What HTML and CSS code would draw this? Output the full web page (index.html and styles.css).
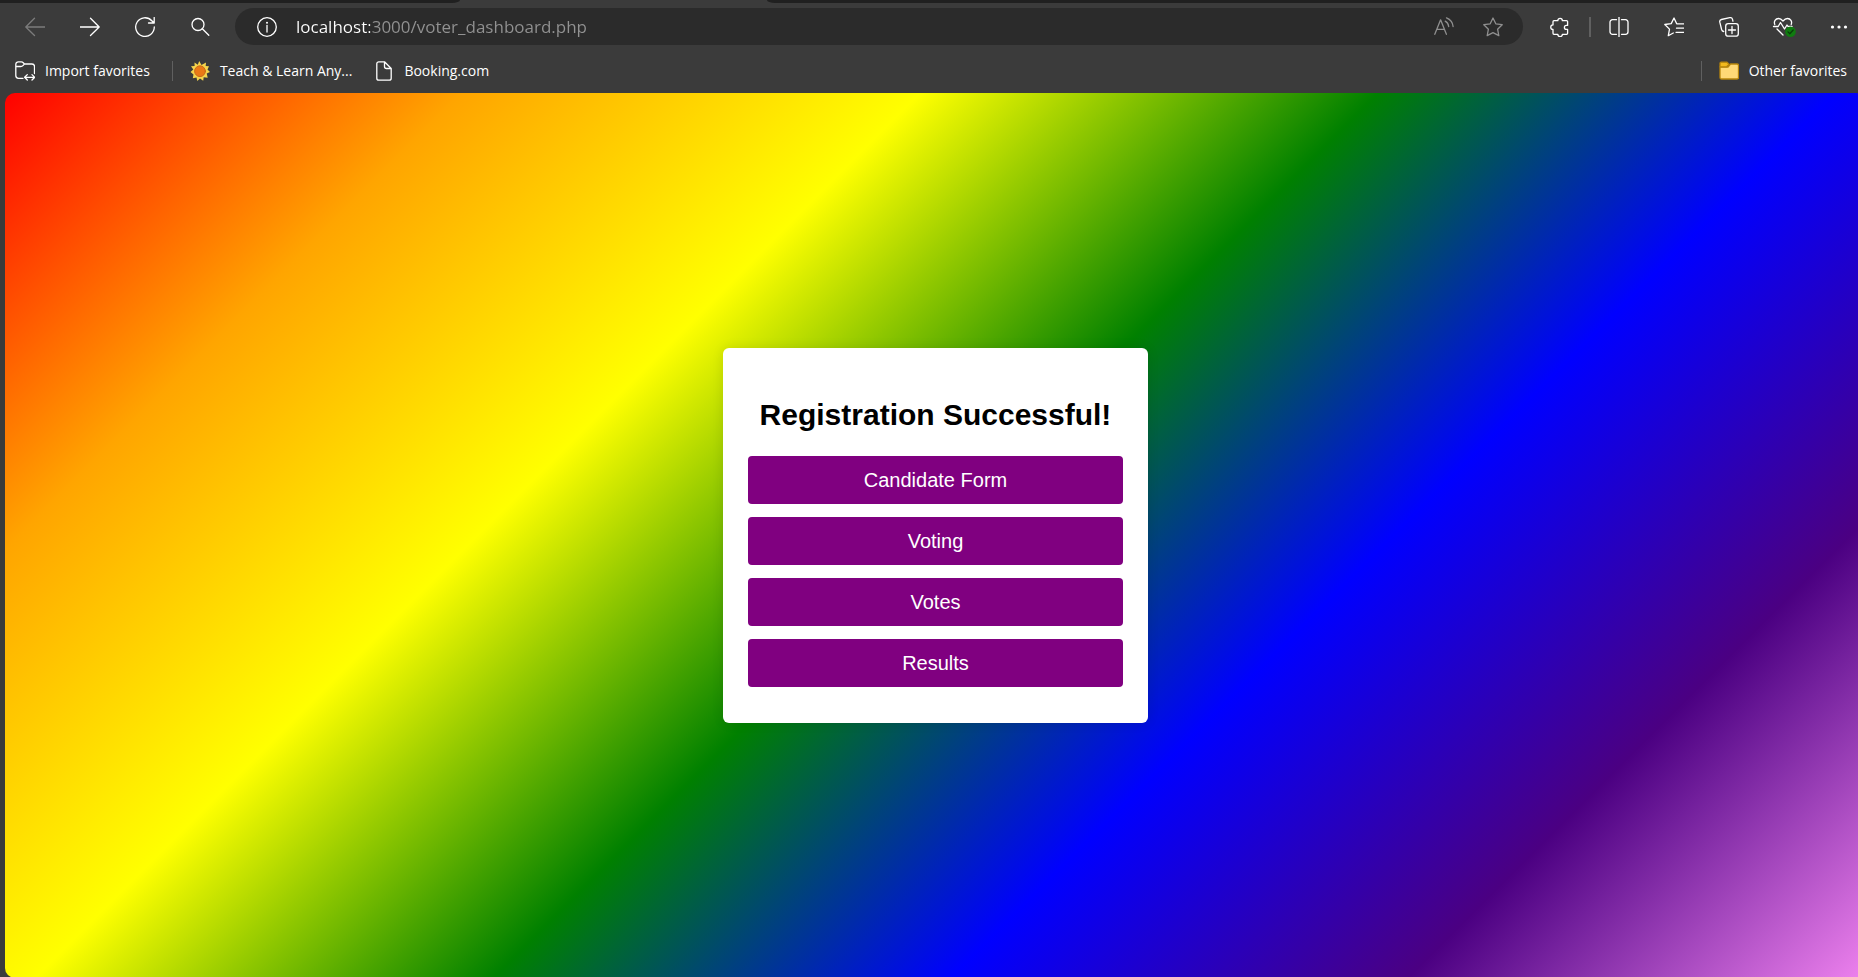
FILE: index.html
```html
<!DOCTYPE html>
<html lang="en">
<head>
<meta charset="utf-8">
<title>Voter Dashboard</title>
<link rel="stylesheet" href="styles.css">
</head>
<body>
<div class="browser">
  <div class="tab-strip"><div class="tab-left"></div><div class="tab-right"></div></div>

  <header class="toolbar">
    <button class="tool dim" aria-label="Back"><svg class="icon" viewBox="0 0 20 20"><path d="M20 10H.8M9.5 1.200.8 10l8.700 8.500"/></svg></button>
    <button class="tool" aria-label="Forward"><svg class="icon" viewBox="0 0 20 20"><path d="M0 10h19.200M10.500 1.200 19.200 10l-8.700 8.500"/></svg></button>
    <button class="tool" aria-label="Refresh"><svg class="icon" viewBox="0 0 20 20"><path d="M19.300 10A9.300 9.300 0 1 1 16.800 3.700L19 6M19.200.5V6h-5.700"/></svg></button>
    <button class="tool" aria-label="Search"><svg class="icon" viewBox="0 0 20 20"><circle cx="8" cy="7.500" r="6"/><path d="m12.300 11.800 6.500 6.500"/></svg></button>

    <div class="address">
      <button class="site-info" aria-label="View site information"><svg class="icon" viewBox="0 0 20 20"><circle cx="10" cy="10" r="9.300"/><path d="M10 8.500V15"/><circle class="solid" cx="10" cy="5.700" r="1"/></svg></button>
      <input class="url" type="text" aria-label="Address" value="localhost:3000/voter_dashboard.php" spellcheck="false">
      <button class="address-tool" aria-label="Read aloud"><svg class="icon" viewBox="0 0 20 20"><path d="M.8 17.300 6.600 2.800l5.800 14.500M2.800 12.300h7.600M11.200 4.200c2 1 3.200 2.700 3.500 5.300M12.500.8c4 1.700 6.300 4.700 6.600 8.700"/></svg></button>
      <button class="address-tool" aria-label="Add to favorites"><svg class="icon" viewBox="0 0 20 20"><path d="m10 1 2.800 5.800 6.400.9-4.600 4.500 1.200 6.400L10 15.700l-5.800 2.900 1.200-6.400L.8 7.700l6.400-.9z"/></svg></button>
    </div>

    <button class="tool" aria-label="Extensions"><svg class="icon" viewBox="0 0 20 20"><path d="M4 3.700h3.800a2.300 2.300 0 0 1 4.600 0h4.200a1 1 0 0 1 1 1v3.700h-1.200a2 2 0 0 0 0 4h1.200v3.900a1 1 0 0 1-1 1h-4.200a2.300 2.300 0 0 1-4.600 0H4a1 1 0 0 1-1-1v-3.900a2.200 2.200 0 0 1 0-4.500V4.700a1 1 0 0 1 1-1z"/></svg></button>
    <span class="tool-divider"></span>
    <button class="tool" aria-label="Split screen"><svg class="icon" viewBox="0 0 20 20"><path d="M10 0v20M7.500 2.700h-4a2.500 2.500 0 0 0-2.500 2.500v9.600a2.500 2.500 0 0 0 2.500 2.500h4M12.500 2.700h4A2.500 2.500 0 0 1 19 5.200v9.600a2.500 2.500 0 0 1-2.500 2.500h-4"/></svg></button>
    <button class="tool" aria-label="Favorites"><svg class="icon" viewBox="0 0 20 20"><path d="M19.700 6.800h-7L10 1 7.200 6.600.8 7.500l4.700 4.600-1.200 6.600 5-2.700M12.500 11.200h7.200M12 15.300h7.700"/></svg></button>
    <button class="tool" aria-label="Collections"><svg class="icon" viewBox="0 0 20 20"><rect x="6.700" y="6.700" width="12.600" height="12.500" rx="2.500"/><path d="M13 9.500v7M9.500 13h7M4.700 14.500c-1.200-.2-1.800-.9-2.100-2L.8 5.200c-.3-1.400.3-2.400 1.600-2.700l8.400-1.800c1.500-.3 2.500.5 2.800 1.900l.3 1.600"/></svg></button>
    <button class="tool" aria-label="Browser essentials"><svg class="icon wide" viewBox="0 0 24 20"><path d="M2.800 7.500C1.500 4.500 3.500 1.500 6.500 1.500c2 0 3.200 1 4.500 2.500 1.300-1.500 2.500-2.500 4.500-2.500 3 0 5 3 3.700 6M1.500 9.500h4.700l2.300-4 4 6.500 2.500-4 1 1.500h4M5 12l6 6"/><circle class="badge-fill" cx="18.500" cy="14.700" r="5.300"/><path class="badge-tick" d="m16 14.900 1.800 1.800 3.400-3.700"/></svg></button>
    <button class="tool" aria-label="Settings and more"><svg class="icon" viewBox="0 0 20 20"><g class="solid"><circle cx="3.500" cy="10" r="1.600"/><circle cx="10" cy="10" r="1.600"/><circle cx="16.500" cy="10" r="1.600"/></g></svg></button>
  </header>

  <nav class="favorites" aria-label="Favorites bar">
    <a class="favorite" href="#import"><svg class="icon" viewBox="0 0 20 20"><path d="M8 17.300H3.500A2.700 2.700 0 0 1 .8 14.600V3.400A2.600 2.600 0 0 1 3.400.8h2.900c1 0 1.500.4 2.200 1.200l.9 1H17a2.500 2.500 0 0 1 2.500 2.500v7M.8 5.500h5c1 0 1.500-.2 2.100-.9l1.500-1.500M9.800 16.300h9.700M12.300 13.600l-2.700 2.700 2.700 2.700M17 13.600l2.700 2.700L17 19"/></svg>Import favorites</a>
    <span class="favorite-divider"></span>
    <a class="favorite" href="#teach"><svg class="icon" viewBox="0 0 20 20"><path class="sun-rays" d="m9.200 0 2.300 4L16 1.500 15.700 5l3.300.2-1.500 3.300L20 11l-3.300 1.500 1 4.200-4-.5-.5 3.600-3.200-2.300L7.300 20l-.8-3.600-3.700.8.700-3.800L.5 11l2.800-2.500L1 5.200l3.600-.1L4.500 1.500l3.300 2.200z"/><circle class="sun-disc" cx="10" cy="10.200" r="5.400"/></svg>Teach &amp; Learn Any...</a>
    <a class="favorite" href="#booking"><svg class="icon" viewBox="0 0 20 20"><path d="M10.500.8H4.800A2 2 0 0 0 2.800 2.800v14.400a2 2 0 0 0 2 2h10.400a2 2 0 0 0 2-2V7.500zM10.500.8v4.700a2 2 0 0 0 2 2h4.700"/></svg>Booking.com</a>
    <div class="favorites-end">
      <span class="favorite-divider"></span>
      <a class="favorite" href="#other"><svg class="icon" viewBox="0 0 20 20"><path class="folder-body" d="M1 6h8l2.500-3H18a1.500 1.500 0 0 1 1.500 1.500v12A1.500 1.500 0 0 1 18 18H2.500A1.500 1.500 0 0 1 1 16.500z"/><path class="folder-tab" d="M1 5.800V2.500A1.300 1.300 0 0 1 2.300 1.200H8L10 3.200 7.700 5.800z"/></svg>Other favorites</a>
    </div>
  </nav>

  <main class="page">
    <section class="card">
      <h2 class="card-title">Registration Successful!</h2>
      <div class="actions">
        <a class="action" href="#candidate">Candidate Form</a>
        <a class="action" href="#voting">Voting</a>
        <a class="action" href="#votes">Votes</a>
        <a class="action" href="#results">Results</a>
      </div>
    </section>
  </main>
</div>
</body>
</html>
```

FILE: styles.css
```css
* { box-sizing: border-box; }

body {
  margin: 0;
  overflow: hidden;
  background: #3b3b3b;
}

.browser {
  display: flex;
  flex-direction: column;
  height: calc(100vh + 1px);
  margin-right: -8px;
  font-family: "Open Sans", "Noto Sans", sans-serif;
  color: #fff;
}

button {
  padding: 0;
  border: 0;
  background: none;
  color: inherit;
}

.tab-strip {
  display: flex;
  justify-content: space-between;
  height: 3px;
}
.tab-left,
.tab-right { background: #202020; }
.tab-left {
  width: 460px;
  border-bottom-right-radius: 8px 3px;
}
.tab-right {
  width: calc(100% - 767px);
  border-bottom-left-radius: 8px 3px;
}

.icon {
  display: block;
  flex: none;
  width: 20px;
  height: 20px;
  fill: none;
  stroke: currentColor;
  stroke-width: 1.3;
  stroke-linecap: round;
  stroke-linejoin: round;
}
.icon.wide { width: 24px; }
.solid { fill: currentColor; stroke: none; }
.badge-fill { fill: #107c10; stroke: none; }
.badge-tick { stroke: #0a3d0a; }
.sun-rays { fill: #f5d44c; stroke: none; }
.sun-disc { fill: #ea7916; stroke: #c96a18; stroke-width: 1; }
.folder-body { fill: #ffd976; stroke: #b8860b; }
.folder-tab { fill: #f2b91d; stroke: #b8860b; }

.toolbar {
  display: flex;
  align-items: center;
  height: 47px;
  padding-left: 7px;
}
.tool {
  display: flex;
  flex: none;
  align-items: center;
  justify-content: center;
  width: 55px;
  height: 36px;
}
.dim { color: #7c7c7c; }
.tool-divider {
  width: 2px;
  height: 20px;
  margin-left: 2px;
  background: #606060;
}

.address {
  display: flex;
  flex: 1;
  align-items: center;
  height: 37px;
  margin: 0 9px 0 8px;
  padding: 0 6px 0 22px;
  border-radius: 19px;
  background: #2b2b2b;
}
.site-info { margin-right: 19px; }
.url {
  flex: 1;
  min-width: 0;
  padding: 0;
  border: 0;
  outline: 0;
  background: linear-gradient(90deg, #fff 74px, #929292 74px);
  background-clip: text;
  -webkit-background-clip: text;
  color: transparent;
  font: 17px/24px "Open Sans", "Noto Sans", sans-serif;
}
.address-tool {
  display: flex;
  justify-content: center;
  width: 49px;
  color: #8f8f8f;
}

.favorites {
  display: flex;
  align-items: center;
  height: 43px;
  padding: 0 19px 2px 15px;
}
.favorite {
  display: flex;
  align-items: center;
  gap: 10px;
  margin-right: 22px;
  color: #fff;
  font-size: 14px;
  line-height: 20px;
  text-decoration: none;
  white-space: nowrap;
}
.favorite-divider {
  width: 1px;
  height: 20px;
  margin-right: 17px;
  background: #606060;
}
.favorites-end {
  display: flex;
  align-items: center;
  margin-left: auto;
}
.favorites-end .favorite { margin-right: 0; }

.page {
  display: flex;
  flex: 1;
  align-items: center;
  justify-content: center;
  margin-left: 5px;
  border-radius: 10px;
  background: linear-gradient(135deg, red, orange, yellow, green, blue, indigo, violet);
  font-family: "Liberation Sans", Arial, sans-serif;
}
.card {
  width: 425px;
  padding: 25px 25px 36px;
  border-radius: 6px;
  background: #fff;
  box-shadow: 0 0 12px rgba(0, 0, 0, 0.1);
  text-align: center;
}
.card-title {
  margin: 25px 0 24px;
  color: #000;
  font-size: 30px;
  line-height: 34px;
}
.actions {
  display: flex;
  flex-direction: column;
  gap: 13px;
}
.action {
  padding: 12px;
  border-radius: 4px;
  background: purple;
  color: #fff;
  font-size: 20px;
  line-height: 24px;
  text-decoration: none;
}
```
